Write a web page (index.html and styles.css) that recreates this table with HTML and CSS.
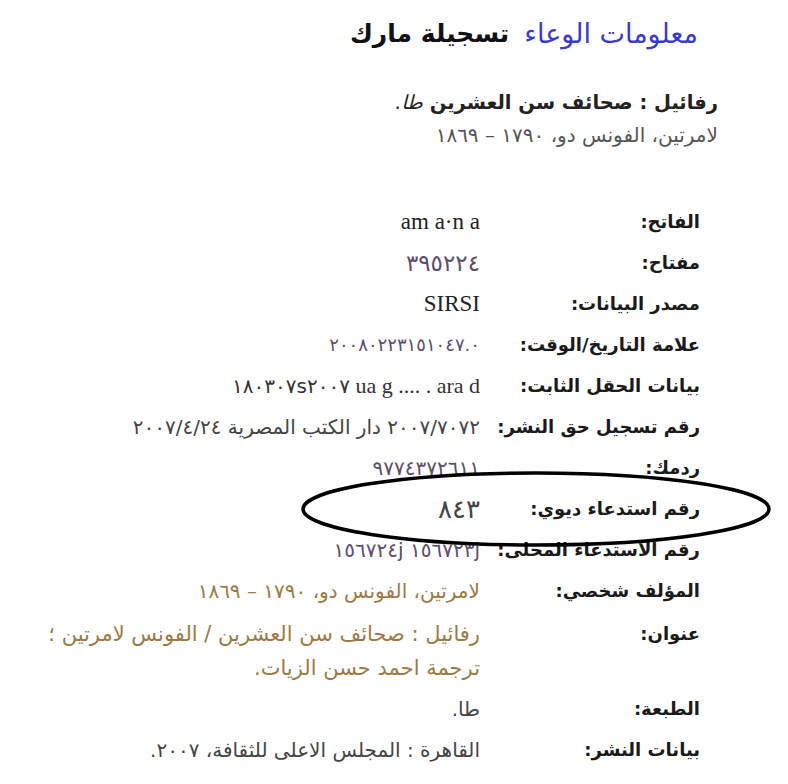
FILE: index.html
```html
<!DOCTYPE html>
<html lang="ar" dir="rtl">
<head>
<meta charset="utf-8">
<link rel="stylesheet" href="styles.css">
</head>
<body>
<div class="page">
  <div class="tabs">
    <span class="tab-link">معلومات الوعاء</span>
    <span class="tab-current">تسجيلة مارك</span>
  </div>
  <div class="summary">
    <div class="summary-title">رفائيل : صحائف سن العشرين <span class="ital">طا.</span></div>
    <div class="summary-author">لامرتين، الفونس دو، ١٧٩٠ – ١٨٦٩</div>
  </div>
  <div class="fields">
    <div class="label">الفاتح:</div>
    <div class="value latin"><span dir="ltr">am a·n a</span></div>

    <div class="label">مفتاح:</div>
    <div class="value purple digits">٣٩٥٢٢٤</div>

    <div class="label">مصدر البيانات:</div>
    <div class="value latin">SIRSI</div>

    <div class="label">علامة التاريخ/الوقت:</div>
    <div class="value purple stamp">٢٠٠٨٠٢٢٣١٥١٠٤٧.٠</div>

    <div class="label">بيانات الحقل الثابت:</div>
    <div class="value mixed"><span dir="ltr"><span class="ar">١٨٠٣٠٧s٢٠٠٧</span> ua g .... . ara d</span></div>

    <div class="label">رقم تسجيل حق النشر:</div>
    <div class="value gray">٢٠٠٧/٧٠٧٢ دار الكتب المصرية ٢٠٠٧/٤/٢٤</div>

    <div class="label">ردمك:</div>
    <div class="value purple">٩٧٧٤٣٧٢٦١١</div>

    <div class="label">رقم استدعاء ديوي:</div>
    <div class="value gray dewey">٨٤٣</div>

    <div class="label">رقم الاستدعاء المحلى:</div>
    <div class="value purple"><span dir="ltr">١٥٦٧٢٤j ١٥٦٧٢٣j</span></div>

    <div class="label">المؤلف شخصي:</div>
    <div class="value gold">لامرتين، الفونس دو، ١٧٩٠ – ١٨٦٩</div>

    <div class="label spaced">عنوان:</div>
    <div class="value gold wide spaced">رفائيل : صحائف سن العشرين / الفونس لامرتين ؛ ترجمة احمد حسن الزيات.</div>

    <div class="label">الطبعة:</div>
    <div class="value gray">طا.</div>

    <div class="label">بيانات النشر:</div>
    <div class="value gray">القاهرة : المجلس الاعلى للثقافة، ٢٠٠٧.</div>
  </div>
  <svg class="circle" width="472" height="78" viewBox="0 0 472 78">
    <ellipse cx="236" cy="39" rx="233" ry="36" fill="none" stroke="#000" stroke-width="3.5"/>
  </svg>
</div>
</body>
</html>
```

FILE: styles.css
```css
html, body {
  margin: 0;
  padding: 0;
  background: #fff;
}
body {
  font-family: "DejaVu Sans", sans-serif;
  color: #222;
}
.page {
  position: relative;
  width: 788px;
  height: 784px;
  overflow: hidden;
}
.tabs {
  display: flex;
  align-items: center;
  gap: 15px;
  padding: 14px 90px 0 0;
  height: 38px;
}
.tab-link {
  color: #3a3ad0;
  font-size: 27px;
}
.tab-current {
  color: #111;
  font-weight: bold;
  font-size: 25px;
}
.summary {
  padding: 35px 70px 0 0;
}
.summary-title {
  font-size: 19.5px;
  font-weight: bold;
  color: #222;
  line-height: 32px;
}
.ital {
  font-style: italic;
  font-weight: normal;
}
.summary-author {
  font-size: 20px;
  color: #555;
  line-height: 32px;
}
.fields {
  display: grid;
  grid-template-columns: 210px 1fr;
  column-gap: 10px;
  row-gap: 7px;
  padding: 54px 88px 0 10px;
  line-height: 34px;
}
.label {
  font-size: 18px;
  font-weight: bold;
  color: #1a1a1a;
}
.value {
  font-size: 20px;
  color: #444;
}
.spaced {
  padding-top: 2px;
}
.wide {
  font-size: 21px;
}
.digits {
  font-size: 23px;
}
.stamp {
  font-size: 18px;
}
.dewey {
  font-size: 26px;
}
.latin {
  font-family: "Liberation Serif", serif;
  font-size: 23px;
  color: #222;
}
.mixed {
  font-family: "Liberation Serif", serif;
  font-size: 22px;
  color: #333;
}
.mixed .ar {
  font-family: "DejaVu Sans", sans-serif;
  font-size: 20px;
}
.purple {
  color: #5e4e6a;
}
.gray {
  color: #444;
}
.gold {
  color: #9c7a45;
}
.circle {
  position: absolute;
  left: 300px;
  top: 470px;
}
```
